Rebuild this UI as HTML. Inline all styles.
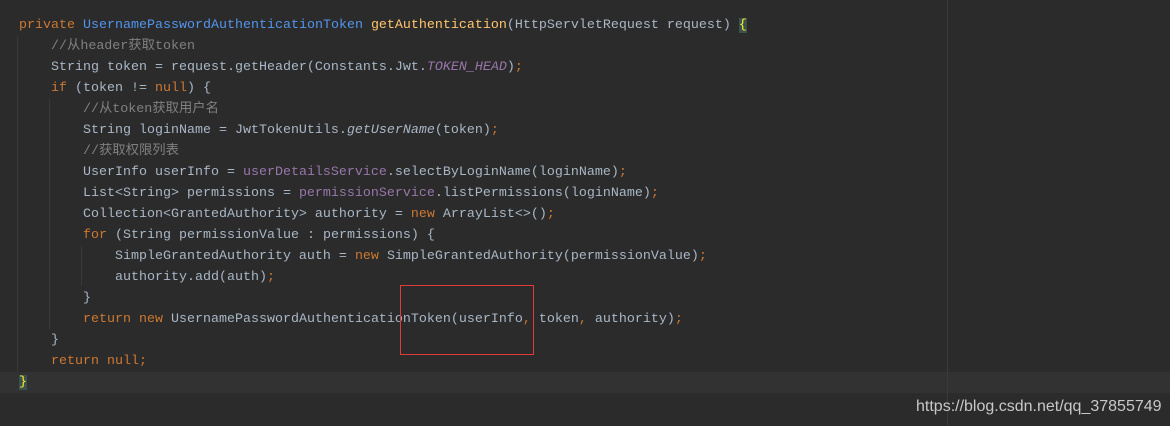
<!DOCTYPE html>
<html><head><meta charset="utf-8"><style>
html,body{margin:0;padding:0}
body{width:1170px;height:426px;background:#2b2b2b;position:relative;overflow:hidden;font-family:"Liberation Mono","Noto Sans CJK SC",monospace;font-size:13.33px;color:#a9b7c6}
.l{position:absolute;left:19px;height:21px;line-height:21px;white-space:pre}
.k{color:#cc7832}.c{color:#5394ec}.m{color:#ffc66d}.cm{color:#808080}.f{color:#9876aa}.i{font-style:italic}
.g{position:absolute;width:1px;background:#393939}
</style></head><body>
<div style="position:absolute;left:0;top:372px;width:1170px;height:21px;background:#323232"></div>
<div style="position:absolute;left:947px;top:0;width:1px;height:426px;background:#3a3a3a"></div>
<div class="g" style="left:17px;top:36px;height:336px"></div>
<div class="g" style="left:49px;top:99px;height:230px"></div>
<div class="g" style="left:81px;top:246px;height:40px"></div>
<div class="l" style="top:15px"><span class="k">private </span><span class="c">UsernamePasswordAuthenticationToken </span><span class="m">getAuthentication</span>(HttpServletRequest request) <span style="background:#3b514d;color:#ffef28">{</span></div>
<div class="l cm" style="top:36px">    //从header获取token</div>
<div class="l" style="top:57px">    String token = request.getHeader(Constants.Jwt.<span class="f i">TOKEN_HEAD</span>)<span class="k">;</span></div>
<div class="l" style="top:78px">    <span class="k">if </span>(token != <span class="k">null</span>) {</div>
<div class="l cm" style="top:99px">        //从token获取用户名</div>
<div class="l" style="top:120px">        String loginName = JwtTokenUtils.<span class="i">getUserName</span>(token)<span class="k">;</span></div>
<div class="l cm" style="top:141px">        //获取权限列表</div>
<div class="l" style="top:162px">        UserInfo userInfo = <span class="f">userDetailsService</span>.selectByLoginName(loginName)<span class="k">;</span></div>
<div class="l" style="top:183px">        List&lt;String&gt; permissions = <span class="f">permissionService</span>.listPermissions(loginName)<span class="k">;</span></div>
<div class="l" style="top:204px">        Collection&lt;GrantedAuthority&gt; authority = <span class="k">new </span>ArrayList&lt;&gt;()<span class="k">;</span></div>
<div class="l" style="top:225px">        <span class="k">for </span>(String permissionValue : permissions) {</div>
<div class="l" style="top:246px">            SimpleGrantedAuthority auth = <span class="k">new </span>SimpleGrantedAuthority(permissionValue)<span class="k">;</span></div>
<div class="l" style="top:267px">            authority.add(auth)<span class="k">;</span></div>
<div class="l" style="top:288px">        }</div>
<div class="l" style="top:309px">        <span class="k">return new </span>UsernamePasswordAuthenticationToken(userInfo<span class="k">, </span>token<span class="k">, </span>authority)<span class="k">;</span></div>
<div class="l" style="top:330px">    }</div>
<div class="l" style="top:351px">    <span class="k">return null;</span></div>
<div class="l" style="top:372px"><span style="background:#3b514d;color:#ffef28">}</span></div>
<div style="position:absolute;left:400px;top:285px;width:132px;height:68px;border:1px solid #e03a3a"></div>
<div style="position:absolute;left:916px;top:398px;font-family:'Liberation Sans',sans-serif;font-size:16px;color:#c8c8c8">https://blog.csdn.net/qq_37855749</div>
</body></html>
